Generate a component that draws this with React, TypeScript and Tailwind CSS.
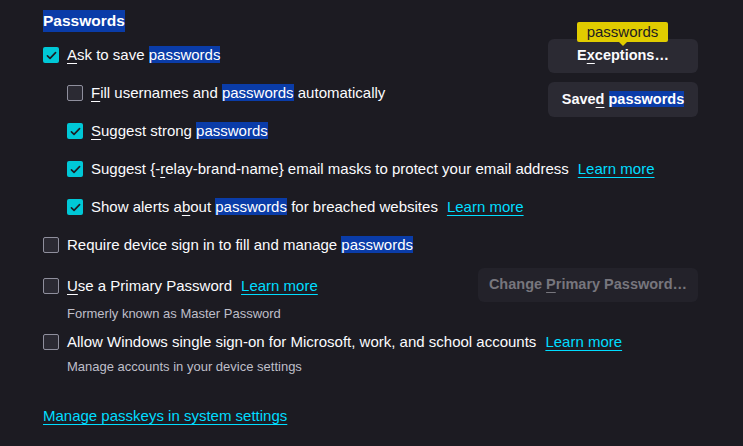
import { ReactNode } from "react";

const font = { fontFamily: '"Liberation Sans", Arial, sans-serif' };

function Hl({ children }: { children: ReactNode }) {
  return <span className="bg-[#0a3ca8] text-white">{children}</span>;
}

function Key({ children }: { children: ReactNode }) {
  return <u className="underline underline-offset-[3px] decoration-1">{children}</u>;
}

function Checkbox({ checked }: { checked?: boolean }) {
  if (checked) {
    return (
      <span className="size-4 shrink-0 rounded-[2px] bg-[#00c8d7] flex items-center justify-center">
        <svg viewBox="0 0 16 16" className="size-[13px]" fill="none">
          <path d="M3 8.5l3.2 3L13 4.5" stroke="#1c1b22" strokeWidth="2" strokeLinecap="round" strokeLinejoin="round" />
        </svg>
      </span>
    );
  }
  return <span className="size-4 shrink-0 rounded-[2px] bg-[#2b2a33] border border-[#8f8f9d]" />;
}

function Link({ children }: { children: ReactNode }) {
  return (
    <a href="#" className="text-[#00ddff] underline underline-offset-[3px] decoration-1 ml-[9px]">
      {children}
    </a>
  );
}

function Row({ checked, indent, children }: { checked?: boolean; indent?: boolean; children: ReactNode }) {
  return (
    <div className={"h-[38px] flex items-center gap-2 " + (indent ? "pl-6" : "")}>
      <Checkbox checked={checked} />
      <span className="whitespace-nowrap">{children}</span>
    </div>
  );
}

export default function App() {
  return (
    <div style={font} className="min-h-screen bg-[#1c1b22] text-[#fbfbfe] text-[15px] pl-[43px] pr-[45px] pt-[9px]">
      <h1 className="h-[27px] text-[15.5px] font-bold">
        <span className="inline-block h-[22px] leading-[22px] bg-[#0a3ca8] text-white">Passwords</span>
      </h1>

      <div className="h-[76px] flex justify-between">
        <div>
          <Row checked>
            <Key>A</Key>sk to save <Hl>passwords</Hl>
          </Row>
          <Row indent>
            <Key>F</Key>ill usernames and <Hl>passwords</Hl> automatically
          </Row>
        </div>
        <div className="w-[150px] shrink-0 mt-[3px] flex flex-col gap-[9px]">
          <button className="relative h-[34px] shrink-0 rounded-[6px] bg-[#2b2a33] font-bold text-[14.5px] whitespace-nowrap">
            E<Key>x</Key>ceptions…
            <span className="absolute left-[29px] -top-[17px] w-[91px] h-[20px] bg-[#e0cc00] text-[#1c1b22] font-normal text-[15px] leading-[20px] rounded-[2px]">
              passwords
              <span className="absolute left-1/2 -translate-x-1/2 top-[19px] border-x-[5px] border-x-transparent border-t-[5px] border-t-[#e0cc00]" />
            </span>
          </button>
          <button className="h-[35px] shrink-0 rounded-[6px] bg-[#2b2a33] font-bold text-[14.5px] whitespace-nowrap">
            Save<Key>d</Key> <Hl>passwords</Hl>
          </button>
        </div>
      </div>

      <Row checked indent>
        <Key>S</Key>uggest strong <Hl>passwords</Hl>
      </Row>
      <Row checked indent>
        Suggest {"{-"}
        <Key>r</Key>elay-brand-name{"}"} email masks to protect your email address
        <Link>Learn more</Link>
      </Row>
      <Row checked indent>
        Show alerts a<Key>b</Key>out <Hl>passwords</Hl> for breached websites
        <Link>Learn more</Link>
      </Row>
      <Row>
        Require device sign in to fill and manage <Hl>passwords</Hl>
      </Row>

      <div className="h-[42px] flex items-center justify-between">
        <div className="flex items-center gap-2 pt-[2px]">
          <Checkbox />
          <span>
            <Key>U</Key>se a Primary Password
            <Link>Learn more</Link>
          </span>
        </div>
        <button className="w-[220px] h-[34px] rounded-[6px] bg-[#23222a] text-[#77767d] font-bold text-[14.5px] whitespace-nowrap">
          Change <Key>P</Key>rimary Password…
        </button>
      </div>
      <div className="pl-6 h-[16px] leading-[16px] text-[13px] text-[#bfbfc9]">Formerly known as Master Password</div>

      <div className="mt-[7px] h-[26px] flex items-center gap-2">
        <Checkbox />
        <span>
          Allow Windows single sign-on for Microsoft, work, and school accounts
          <Link>Learn more</Link>
        </span>
      </div>
      <div className="mt-[4px] pl-6 h-[16px] leading-[16px] text-[13px] text-[#bfbfc9]">Manage accounts in your device settings</div>

      <div className="mt-[30px]">
        <a href="#" className="text-[#00ddff] underline underline-offset-[3px] decoration-1">
          Manage passkeys in system settings
        </a>
      </div>
    </div>
  );
}
